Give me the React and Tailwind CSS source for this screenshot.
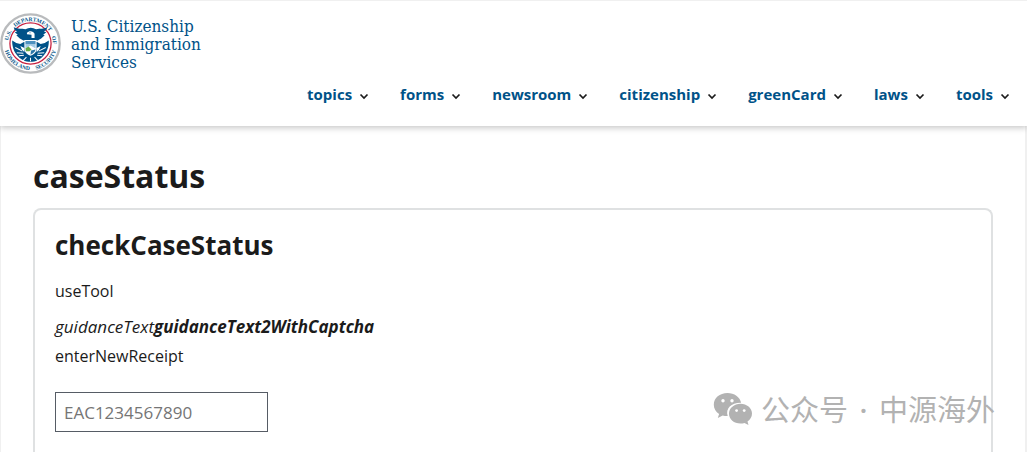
import {useState} from "react";

const menuItems=["topics","forms","newsroom","citizenship","greenCard","laws","tools"];

export default function App(){

    return (
        <div className="min-h-screen flex flex-col overflow-x-hidden bg-white text-[#1b1b1b] font-['Open_Sans','Noto_Sans',sans-serif]">
            <Header/>
            <CaseStatus/>
            <Watermark/>
        </div>
    );
}

function Header(){

    return (
        <header className="relative z-10 h-[126px] flex flex-col justify-between border-t border-[#f0f0f0] bg-white shadow-[0_2px_6px_rgba(0,0,0,0.22)]">
            <a href="#" className="flex items-center pt-3 text-[#005288]">
                <Seal/>
                <span className="flex flex-col pl-2.5 font-['DejaVu_Serif_Condensed','DejaVu_Serif',serif] text-[17px] leading-[18px]">
                    <span>U.S. Citizenship</span>
                    <span>and Immigration</span>
                    <span>Services</span>
                </span>
            </a>
            <nav className="flex justify-end gap-8 pr-[18px] pb-5">
                {menuItems.map((item)=><MenuButton key={item} label={item}/>)}
            </nav>
        </header>
    );
}

function MenuButton(props){

    return (
        <button type="button" className="flex items-center gap-2 text-[15px] leading-6 font-bold text-[#005288] cursor-pointer">
            {props.label}
            <svg viewBox="0 0 8 5" className="w-2 h-[5px] mt-1 overflow-visible" fill="none" stroke="#1b1b1b" strokeWidth="1.7">
                <path d="M0.5 0.5 4 4 7.5 0.5"/>
            </svg>
        </button>
    );
}

function CaseStatus(){

    const [receipt,setReceipt]=useState("");

    return (
        <main className="flex-1 flex flex-col border-l border-r-2 border-[#f0f0f0] px-8 pt-7">
            <h1 className="text-[32px] leading-[44px] font-bold">caseStatus</h1>
            <section className="flex-1 mt-[10px] px-5 pt-4 rounded-t-lg border-2 border-b-0 border-[#dfe1e2]">
                <h2 className="text-[26px] leading-[39px] font-bold">checkCaseStatus</h2>
                <p className="mt-3 text-base leading-7">useTool</p>
                <p className="mt-2 text-[17px] leading-7 italic">guidanceText<b>guidanceText2WithCaptcha</b></p>
                <label htmlFor="receipt" className="block text-base leading-[30px]">enterNewReceipt</label>
                <input
                    id="receipt"
                    type="text"
                    placeholder="EAC1234567890"
                    value={receipt}
                    onChange={(e)=>setReceipt(e.target.value)}
                    className="mt-[21px] block h-10 w-[213px] border border-[#565c65] px-2 text-[17px] placeholder:text-[#757575]"
                />
            </section>
        </main>
    );
}

function Watermark(){

    return (
        <div className="absolute right-8 bottom-6 z-20 flex items-center gap-2 text-[#b2b2b2]">
            <svg viewBox="0 0 40 33" className="w-10 h-[33px]" fill="currentColor">
                <path d="M14.5 1C6.700 1 .8 6 .8 12.700c0 3.900 2 7 5.300 9.300L4.800 26l4.900-2.500c1.600.4 3.200.7 5 .6-2.500-8 4-13.700 13.400-13.400C27 5 21.200 1 14.500 1Z"/>
                <path d="M39 21.600c0-5.500-5.200-9.800-11.500-9.800S16 16.200 16 21.700s5 9.800 11.500 9.800c1.400 0 2.800-.2 4-.6l4 2.100-1-3.400c2.700-1.900 4.500-4.700 4.500-8Z"/>
                <g fill="#fff">
                    <circle cx="10" cy="8.700" r="1.700"/>
                    <circle cx="19" cy="8.700" r="1.700"/>
                    <circle cx="23.600" cy="18.600" r="1.400"/>
                    <circle cx="31.200" cy="18.600" r="1.400"/>
                </g>
            </svg>
            <span className="pt-1 text-[29px] leading-9 font-['Open_Sans','Noto_Sans_CJK_SC',sans-serif]">
                公众号 <b className="px-1 font-semibold">·</b> 中源海外
            </span>
        </div>
    );
}

function Seal(){

    return (
        <svg viewBox="0 0 120 120" className="w-[61px] h-[61px]" aria-hidden="true">
            <defs>
                <path id="sealTop" d="M21.900 82A44 44 0 1 1 98.100 82"/>
                <path id="sealBottom" d="M7.700 60A52.300 52.300 0 0 0 112.300 60"/>
            </defs>
            <circle cx="60" cy="60" r="57.500" fill="#fff" stroke="#b9bbbd" strokeWidth="4.500"/>
            <g fill="#005288" fontSize="11" fontWeight="bold" fontFamily="Liberation Serif, serif" textAnchor="middle">
                <text><textPath href="#sealTop" startOffset="21%">U.S.</textPath></text>
                <text><textPath href="#sealTop" startOffset="53%">DEPARTMENT</textPath></text>
                <text><textPath href="#sealTop" startOffset="84%">OF</textPath></text>
                <text><textPath href="#sealBottom" startOffset="29%">HOMELAND</textPath></text>
                <text><textPath href="#sealBottom" startOffset="74%">SECURITY</textPath></text>
            </g>
            <circle cx="60" cy="60" r="40.500" fill="#fff" stroke="#c8203f" strokeWidth="2.500"/>
            {/* wings */}
            <path d="M27 28C35 32 42 30 50 32 57 28 64 28 71 32 79 30 86 32 93 28L91 34 86 36 91 38 85 43 88 44 81 50 74 54H46L39 50 32 44 35 43 29 38 34 36 29 34Z" fill="#005288"/>
            {/* body and tail */}
            <path d="M24 54 32 59 40 61 47 57H73L80 61 88 59 96 54C97 77 80 96 60 96S23 77 24 54Z" fill="#005288"/>
            {/* head */}
            <path d="M53 39C57 34 66 35 68 41V49H62V43L53 42Z" fill="#fff"/>
            <circle cx="59" cy="39" r="1" fill="#005288"/>
            {/* olive branch and arrows */}
            <g fill="none" stroke="#fff" strokeWidth="2">
                <path d="M30 68 44 75M33 78 46 79M37 84 47 83"/>
                <path d="M90 68 76 75M87 78 74 79M83 84 73 83"/>
                <path d="M52 87 45 94M60 88V95M68 87 75 94"/>
            </g>
            <path d="M40 65 48 69 48 77 43 72Z" fill="#fff"/>
            <path d="M80 65 72 69 72 77 77 72Z" fill="#fff"/>
            {/* shield */}
            <path d="M48 53H72V70C72 78 66 82 60 84 54 82 48 78 48 70Z" fill="#fff"/>
            <path d="M50 55H70V62H50Z" fill="#4e91bf"/>
            <path d="M50 62H70V70L60 64 50 70Z" fill="#a4cce5"/>
            <path d="M50 70 56 66 62 72 58 75 51 75Z" fill="#67ad45"/>
            <path d="M61 74 70 72C69 77 65 80 60 82Z" fill="#2f78a9"/>
        </svg>
    );
}
